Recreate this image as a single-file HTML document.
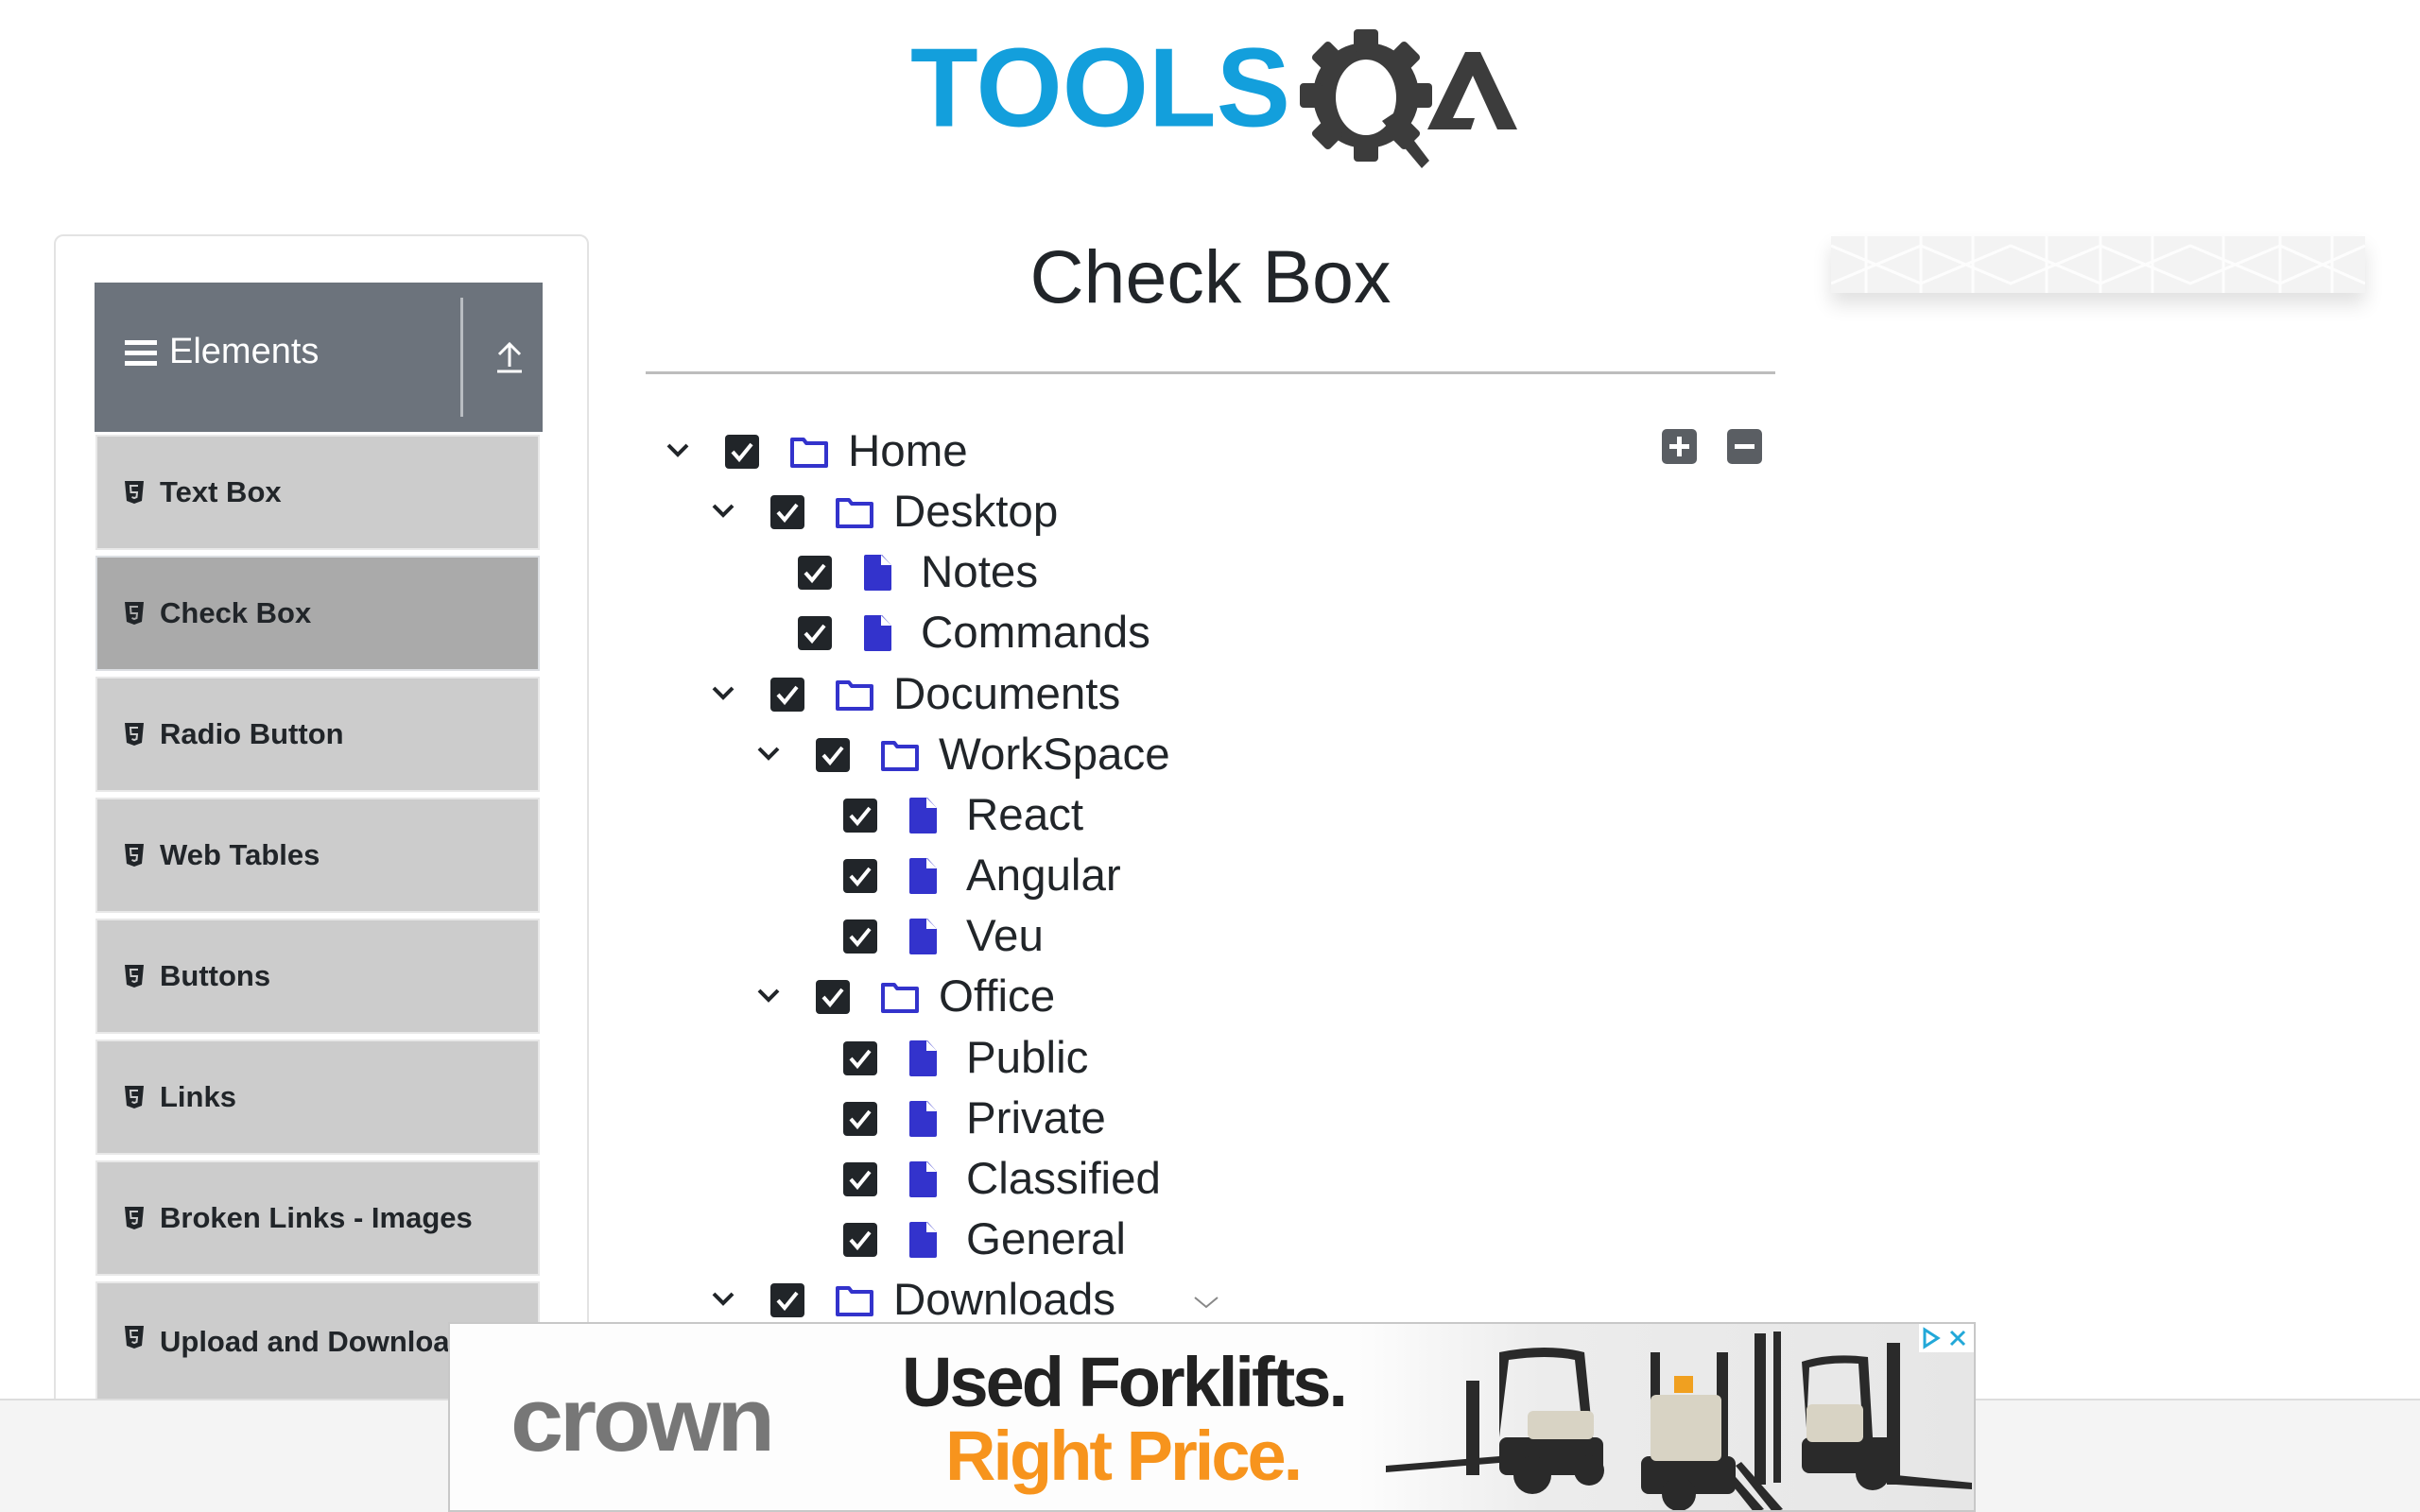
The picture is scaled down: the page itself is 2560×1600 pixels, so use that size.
<!DOCTYPE html>
<html style="overflow:hidden;width:2560px;height:1600px"><head><meta charset="utf-8"><style>
*{margin:0;padding:0;box-sizing:border-box}
body{width:2560px;height:1600px;overflow:hidden;background:#fff;font-family:"Liberation Sans",sans-serif;color:#212529;position:relative}
.abs{position:absolute}
.card{left:57px;top:248px;width:566px;height:1300px;border:2px solid #e3e3e3;border-radius:10px;background:#fff}
.hdr{left:100px;top:299px;width:474px;height:158px;background:#6c737c}
.item{position:absolute;left:101px;width:470px;height:122px;background:#ccc;border:2px solid #e8e8e8;font-weight:bold;font-size:31px;display:flex;align-items:center;padding-left:28px}
.item svg{margin-right:16px}
.item.act{background:#aaa;border-color:#dcdfe3}
.row{position:absolute;height:64px;width:700px}
.row>*{position:absolute}
.row .ch{left:0;top:20px}
.row .cb{left:64px;top:14px}
.row .ic{left:132px;top:14px}
.row .tx{left:194px;top:0;line-height:64px;font-size:47.5px;white-space:nowrap}
.btn{width:37px;height:37px;background:#5a5e63;border-radius:5px}
</style></head><body>

<!-- logo -->
<svg class="abs" style="left:940px;top:20px" width="700" height="170" viewBox="940 20 700 170">
<text x="963" y="134" font-family="Liberation Sans" font-weight="bold" font-size="108" fill="#139fdc" textLength="402" lengthAdjust="spacingAndGlyphs" transform="translate(0 -14) scale(1 1.1)">TOOLS</text>
<g fill="#3c3c3c">
<circle cx="1445" cy="101" r="56"/>
<g transform="translate(1445 101)">
<rect x="-13" y="-70" width="26" height="24" rx="4"/>
<rect x="-13" y="-70" width="26" height="24" rx="4" transform="rotate(45)"/>
<rect x="-13" y="-70" width="26" height="24" rx="4" transform="rotate(90)"/>
<rect x="-13" y="-70" width="26" height="24" rx="4" transform="rotate(135)"/>
<rect x="-13" y="-70" width="26" height="24" rx="4" transform="rotate(180)"/>
<rect x="-13" y="-70" width="26" height="24" rx="4" transform="rotate(225)"/>
<rect x="-13" y="-70" width="26" height="24" rx="4" transform="rotate(270)"/>
<rect x="-13" y="-70" width="26" height="24" rx="4" transform="rotate(315)"/>
</g>
</g>
<ellipse cx="1445" cy="103" rx="32" ry="40" fill="#fff"/>
<path d="M1462 128 L1504 178 L1512 170 L1474 120 Z" fill="#3c3c3c"/>
<path d="M1510 137 L1550 55 L1566 55 L1605 137 L1584 137 L1558 80 L1537 125 L1560 125 L1556 137 Z" fill="#3c3c3c"/>
</svg>

<!-- sidebar -->
<div class="abs card"></div>
<div class="abs hdr"></div>
<div class="abs" style="left:487px;top:315px;width:3px;height:126px;background:#b9bdc2"></div>
<div class="abs" style="left:132px;top:360px;width:34px;height:5px;background:#fff"></div>
<div class="abs" style="left:132px;top:371px;width:34px;height:5px;background:#fff"></div>
<div class="abs" style="left:132px;top:382px;width:34px;height:5px;background:#fff"></div>
<div class="abs" style="left:179px;top:348px;font-size:38px;color:#fff;line-height:48px">Elements</div>
<svg class="abs" style="left:522px;top:360px" width="34" height="36"><path d="M17 4 V28 M6 15 L17 4 L28 15" stroke="#fff" stroke-width="3" fill="none"/><path d="M4 33 H30" stroke="#fff" stroke-width="3"/></svg>

<div class="item" style="top:460px"><svg width="22" height="26" viewBox="0 0 22 26"><path d="M1 1H21L19 22L11 25L3 22Z" fill="#212529"/><path d="M15 6H7L7.5 13H14L13.5 18L11 19L8.5 18" stroke="#ccc" stroke-width="2" fill="none"/></svg>Text Box</div>
<div class="item act" style="top:588px"><svg width="22" height="26" viewBox="0 0 22 26"><path d="M1 1H21L19 22L11 25L3 22Z" fill="#212529"/><path d="M15 6H7L7.5 13H14L13.5 18L11 19L8.5 18" stroke="#aaa" stroke-width="2" fill="none"/></svg>Check Box</div>
<div class="item" style="top:716px"><svg width="22" height="26" viewBox="0 0 22 26"><path d="M1 1H21L19 22L11 25L3 22Z" fill="#212529"/><path d="M15 6H7L7.5 13H14L13.5 18L11 19L8.5 18" stroke="#ccc" stroke-width="2" fill="none"/></svg>Radio Button</div>
<div class="item" style="top:844px"><svg width="22" height="26" viewBox="0 0 22 26"><path d="M1 1H21L19 22L11 25L3 22Z" fill="#212529"/><path d="M15 6H7L7.5 13H14L13.5 18L11 19L8.5 18" stroke="#ccc" stroke-width="2" fill="none"/></svg>Web Tables</div>
<div class="item" style="top:972px"><svg width="22" height="26" viewBox="0 0 22 26"><path d="M1 1H21L19 22L11 25L3 22Z" fill="#212529"/><path d="M15 6H7L7.5 13H14L13.5 18L11 19L8.5 18" stroke="#ccc" stroke-width="2" fill="none"/></svg>Buttons</div>
<div class="item" style="top:1100px"><svg width="22" height="26" viewBox="0 0 22 26"><path d="M1 1H21L19 22L11 25L3 22Z" fill="#212529"/><path d="M15 6H7L7.5 13H14L13.5 18L11 19L8.5 18" stroke="#ccc" stroke-width="2" fill="none"/></svg>Links</div>
<div class="item" style="top:1228px"><svg width="22" height="26" viewBox="0 0 22 26"><path d="M1 1H21L19 22L11 25L3 22Z" fill="#212529"/><path d="M15 6H7L7.5 13H14L13.5 18L11 19L8.5 18" stroke="#ccc" stroke-width="2" fill="none"/></svg>Broken Links - Images</div>
<div class="item" style="top:1356px;height:140px;align-items:flex-start;padding-top:44px"><svg width="22" height="26" viewBox="0 0 22 26"><path d="M1 1H21L19 22L11 25L3 22Z" fill="#212529"/><path d="M15 6H7L7.5 13H14L13.5 18L11 19L8.5 18" stroke="#ccc" stroke-width="2" fill="none"/></svg>Upload and Download</div>

<!-- title -->
<div class="abs" style="left:683px;width:1195px;top:245px;text-align:center;font-size:79px;line-height:96px">Check Box</div>
<div class="abs" style="left:683px;top:393px;width:1195px;height:3px;background:#bdbdbd"></div>

<div class="abs btn" style="left:1758px;top:454px"><div class="abs" style="left:8px;top:16px;width:21px;height:5px;background:#fff"></div><div class="abs" style="left:16px;top:8px;width:5px;height:21px;background:#fff"></div></div>
<div class="abs btn" style="left:1827px;top:454px"><div class="abs" style="left:8px;top:16px;width:21px;height:5px;background:#fff"></div></div>

<!-- tree -->
<svg width="0" height="0" style="position:absolute"><defs>
<symbol id="chev" viewBox="0 0 28 20"><polyline points="4,5 14,15 24,5" stroke="#212529" stroke-width="4" fill="none"/></symbol>
<symbol id="cbx" viewBox="0 0 36 36"><rect width="36" height="36" rx="4" fill="#212529"/><polyline points="8,18 15,26 28,10" stroke="#fff" stroke-width="4" fill="none"/></symbol>
<symbol id="fold" viewBox="0 0 42 36"><path d="M3 5 H15 L18 9 H39 V33 H3 Z" stroke="#3333cc" stroke-width="4" fill="none" stroke-linejoin="round"/></symbol>
<symbol id="file" viewBox="0 0 32 40"><path d="M4 1 H21 L31 12 V37 Q31 39 29 39 H4 Q2 39 2 37 V3 Q2 1 4 1 Z" fill="#3333cc"/><path d="M20 1 L31 12 H20 Z" fill="#fff"/><path d="M22 3 L29 11 H22 Z" fill="#3333cc" opacity="0"/></symbol>
</defs></svg>

<div class="row" style="left:703px;top:446px"><svg class="ch" width="28" height="20"><use href="#chev"/></svg><svg class="cb" width="36" height="36"><use href="#cbx"/></svg><svg class="ic" width="42" height="36"><use href="#fold"/></svg><div class="tx">Home</div></div>
<div class="row" style="left:751px;top:510px"><svg class="ch" width="28" height="20"><use href="#chev"/></svg><svg class="cb" width="36" height="36"><use href="#cbx"/></svg><svg class="ic" width="42" height="36"><use href="#fold"/></svg><div class="tx">Desktop</div></div>
<div class="row" style="left:780px;top:574px"><svg class="cb" width="36" height="36"><use href="#cbx"/></svg><svg class="ic" width="32" height="40" style="top:12px"><use href="#file"/></svg><div class="tx">Notes</div></div>
<div class="row" style="left:780px;top:638px"><svg class="cb" width="36" height="36"><use href="#cbx"/></svg><svg class="ic" width="32" height="40" style="top:12px"><use href="#file"/></svg><div class="tx">Commands</div></div>
<div class="row" style="left:751px;top:703px"><svg class="ch" width="28" height="20"><use href="#chev"/></svg><svg class="cb" width="36" height="36"><use href="#cbx"/></svg><svg class="ic" width="42" height="36"><use href="#fold"/></svg><div class="tx">Documents</div></div>
<div class="row" style="left:799px;top:767px"><svg class="ch" width="28" height="20"><use href="#chev"/></svg><svg class="cb" width="36" height="36"><use href="#cbx"/></svg><svg class="ic" width="42" height="36"><use href="#fold"/></svg><div class="tx">WorkSpace</div></div>
<div class="row" style="left:828px;top:831px"><svg class="cb" width="36" height="36"><use href="#cbx"/></svg><svg class="ic" width="32" height="40" style="top:12px"><use href="#file"/></svg><div class="tx">React</div></div>
<div class="row" style="left:828px;top:895px"><svg class="cb" width="36" height="36"><use href="#cbx"/></svg><svg class="ic" width="32" height="40" style="top:12px"><use href="#file"/></svg><div class="tx">Angular</div></div>
<div class="row" style="left:828px;top:959px"><svg class="cb" width="36" height="36"><use href="#cbx"/></svg><svg class="ic" width="32" height="40" style="top:12px"><use href="#file"/></svg><div class="tx">Veu</div></div>
<div class="row" style="left:799px;top:1023px"><svg class="ch" width="28" height="20"><use href="#chev"/></svg><svg class="cb" width="36" height="36"><use href="#cbx"/></svg><svg class="ic" width="42" height="36"><use href="#fold"/></svg><div class="tx">Office</div></div>
<div class="row" style="left:828px;top:1088px"><svg class="cb" width="36" height="36"><use href="#cbx"/></svg><svg class="ic" width="32" height="40" style="top:12px"><use href="#file"/></svg><div class="tx">Public</div></div>
<div class="row" style="left:828px;top:1152px"><svg class="cb" width="36" height="36"><use href="#cbx"/></svg><svg class="ic" width="32" height="40" style="top:12px"><use href="#file"/></svg><div class="tx">Private</div></div>
<div class="row" style="left:828px;top:1216px"><svg class="cb" width="36" height="36"><use href="#cbx"/></svg><svg class="ic" width="32" height="40" style="top:12px"><use href="#file"/></svg><div class="tx">Classified</div></div>
<div class="row" style="left:828px;top:1280px"><svg class="cb" width="36" height="36"><use href="#cbx"/></svg><svg class="ic" width="32" height="40" style="top:12px"><use href="#file"/></svg><div class="tx">General</div></div>
<div class="row" style="left:751px;top:1344px"><svg class="ch" width="28" height="20"><use href="#chev"/></svg><svg class="cb" width="36" height="36"><use href="#cbx"/></svg><svg class="ic" width="42" height="36"><use href="#fold"/></svg><div class="tx">Downloads</div></div>
<svg class="abs" style="left:1262px;top:1370px" width="28" height="16"><polyline points="2,3 14,13 26,3" stroke="#888" stroke-width="2" fill="none"/></svg>

<!-- top right ad -->
<div class="abs" style="left:1937px;top:250px;width:565px;height:60px;background:#f3f3f3;box-shadow:0 12px 20px rgba(0,0,0,0.12)">
<svg width="565" height="60"><g stroke="#fff" stroke-width="3" fill="none" opacity="0.9"><path d="M0 10 L95 50 L190 10 L285 50 L380 10 L475 50 L565 10"/><path d="M0 50 L95 10 L190 50 L285 10 L380 50 L475 10 L565 50"/><path d="M37 0V60M95 0V60M150 0V60M228 0V60M285 0V60M340 0V60M415 0V60M475 0V60M530 0V60"/></g></svg>
</div>

<!-- footer -->
<div class="abs" style="left:0;top:1480px;width:2560px;height:120px;background:#f4f4f4;border-top:2px solid #ddd"></div>

<!-- bottom ad -->
<div class="abs" style="left:474px;top:1399px;width:1616px;height:201px;background:#fdfdfd;border:2px solid #c8c8c8;overflow:hidden">
<div class="abs" style="left:960px;top:0;width:656px;height:201px;background:linear-gradient(90deg,#fdfdfd,#ececec 30%,#e6e6e6)"></div>
<div class="abs" style="left:64px;top:52px;font-size:96px;font-weight:bold;color:#777;letter-spacing:-4px;line-height:100px;transform:scaleX(1.05);transform-origin:left">crown</div>
<div class="abs" style="left:478px;top:22px;font-size:74px;font-weight:bold;color:#222;letter-spacing:-3px;line-height:80px">Used Forklifts.</div>
<div class="abs" style="left:524px;top:100px;font-size:74px;font-weight:bold;color:#f7941d;letter-spacing:-3px;line-height:80px">Right Price.</div>
<svg class="abs" style="left:960px;top:0" width="656" height="201">
<g fill="#2a2a2a">
<path d="M30 150 L150 140 L150 147 L30 157 Z"/><rect x="115" y="60" width="14" height="100"/>
<path d="M150 30 Q200 20 240 30 L250 130 L240 130 L230 38 Q200 32 160 38 L150 120 Z"/>
<rect x="150" y="120" width="110" height="40" rx="8"/>
<circle cx="185" cy="160" r="20"/><circle cx="245" cy="155" r="16"/>
<rect x="310" y="30" width="10" height="120"/><rect x="380" y="30" width="12" height="140"/>
<rect x="300" y="140" width="100" height="40" rx="8"/>
<circle cx="340" cy="180" r="18"/>
<path d="M420 200 L380 150 L386 146 L430 196Z"/><path d="M440 200 L400 150 L406 146 L450 196Z"/>
<rect x="420" y="10" width="12" height="160"/><rect x="440" y="8" width="8" height="160"/>
<path d="M470 40 Q500 30 540 35 L545 120 L535 120 L530 42 Q500 40 478 46 L475 110Z"/>
<rect x="470" y="120" width="100" height="38" rx="8"/><circle cx="545" cy="158" r="18"/>
<rect x="560" y="20" width="14" height="150"/><path d="M570 160 L650 168 L650 175 L570 170Z"/>
</g>
<g fill="#d8d3c4">
<rect x="180" y="92" width="70" height="30" rx="6"/><rect x="310" y="75" width="75" height="70" rx="6"/><rect x="475" y="85" width="60" height="40" rx="6"/>
</g>
<rect x="335" y="55" width="20" height="18" fill="#f0a020"/>
</svg>
<div class="abs" style="right:0;top:0;width:58px;height:30px;background:#fff"></div>
<svg class="abs" style="right:4px;top:3px" width="52" height="24"><path d="M4 3 L4 21 L18 12 Z" stroke="#22a8d8" stroke-width="3" fill="none"/><path d="M32 5 L46 19 M46 5 L32 19" stroke="#22a8d8" stroke-width="3"/></svg>
</div>

</body></html>
